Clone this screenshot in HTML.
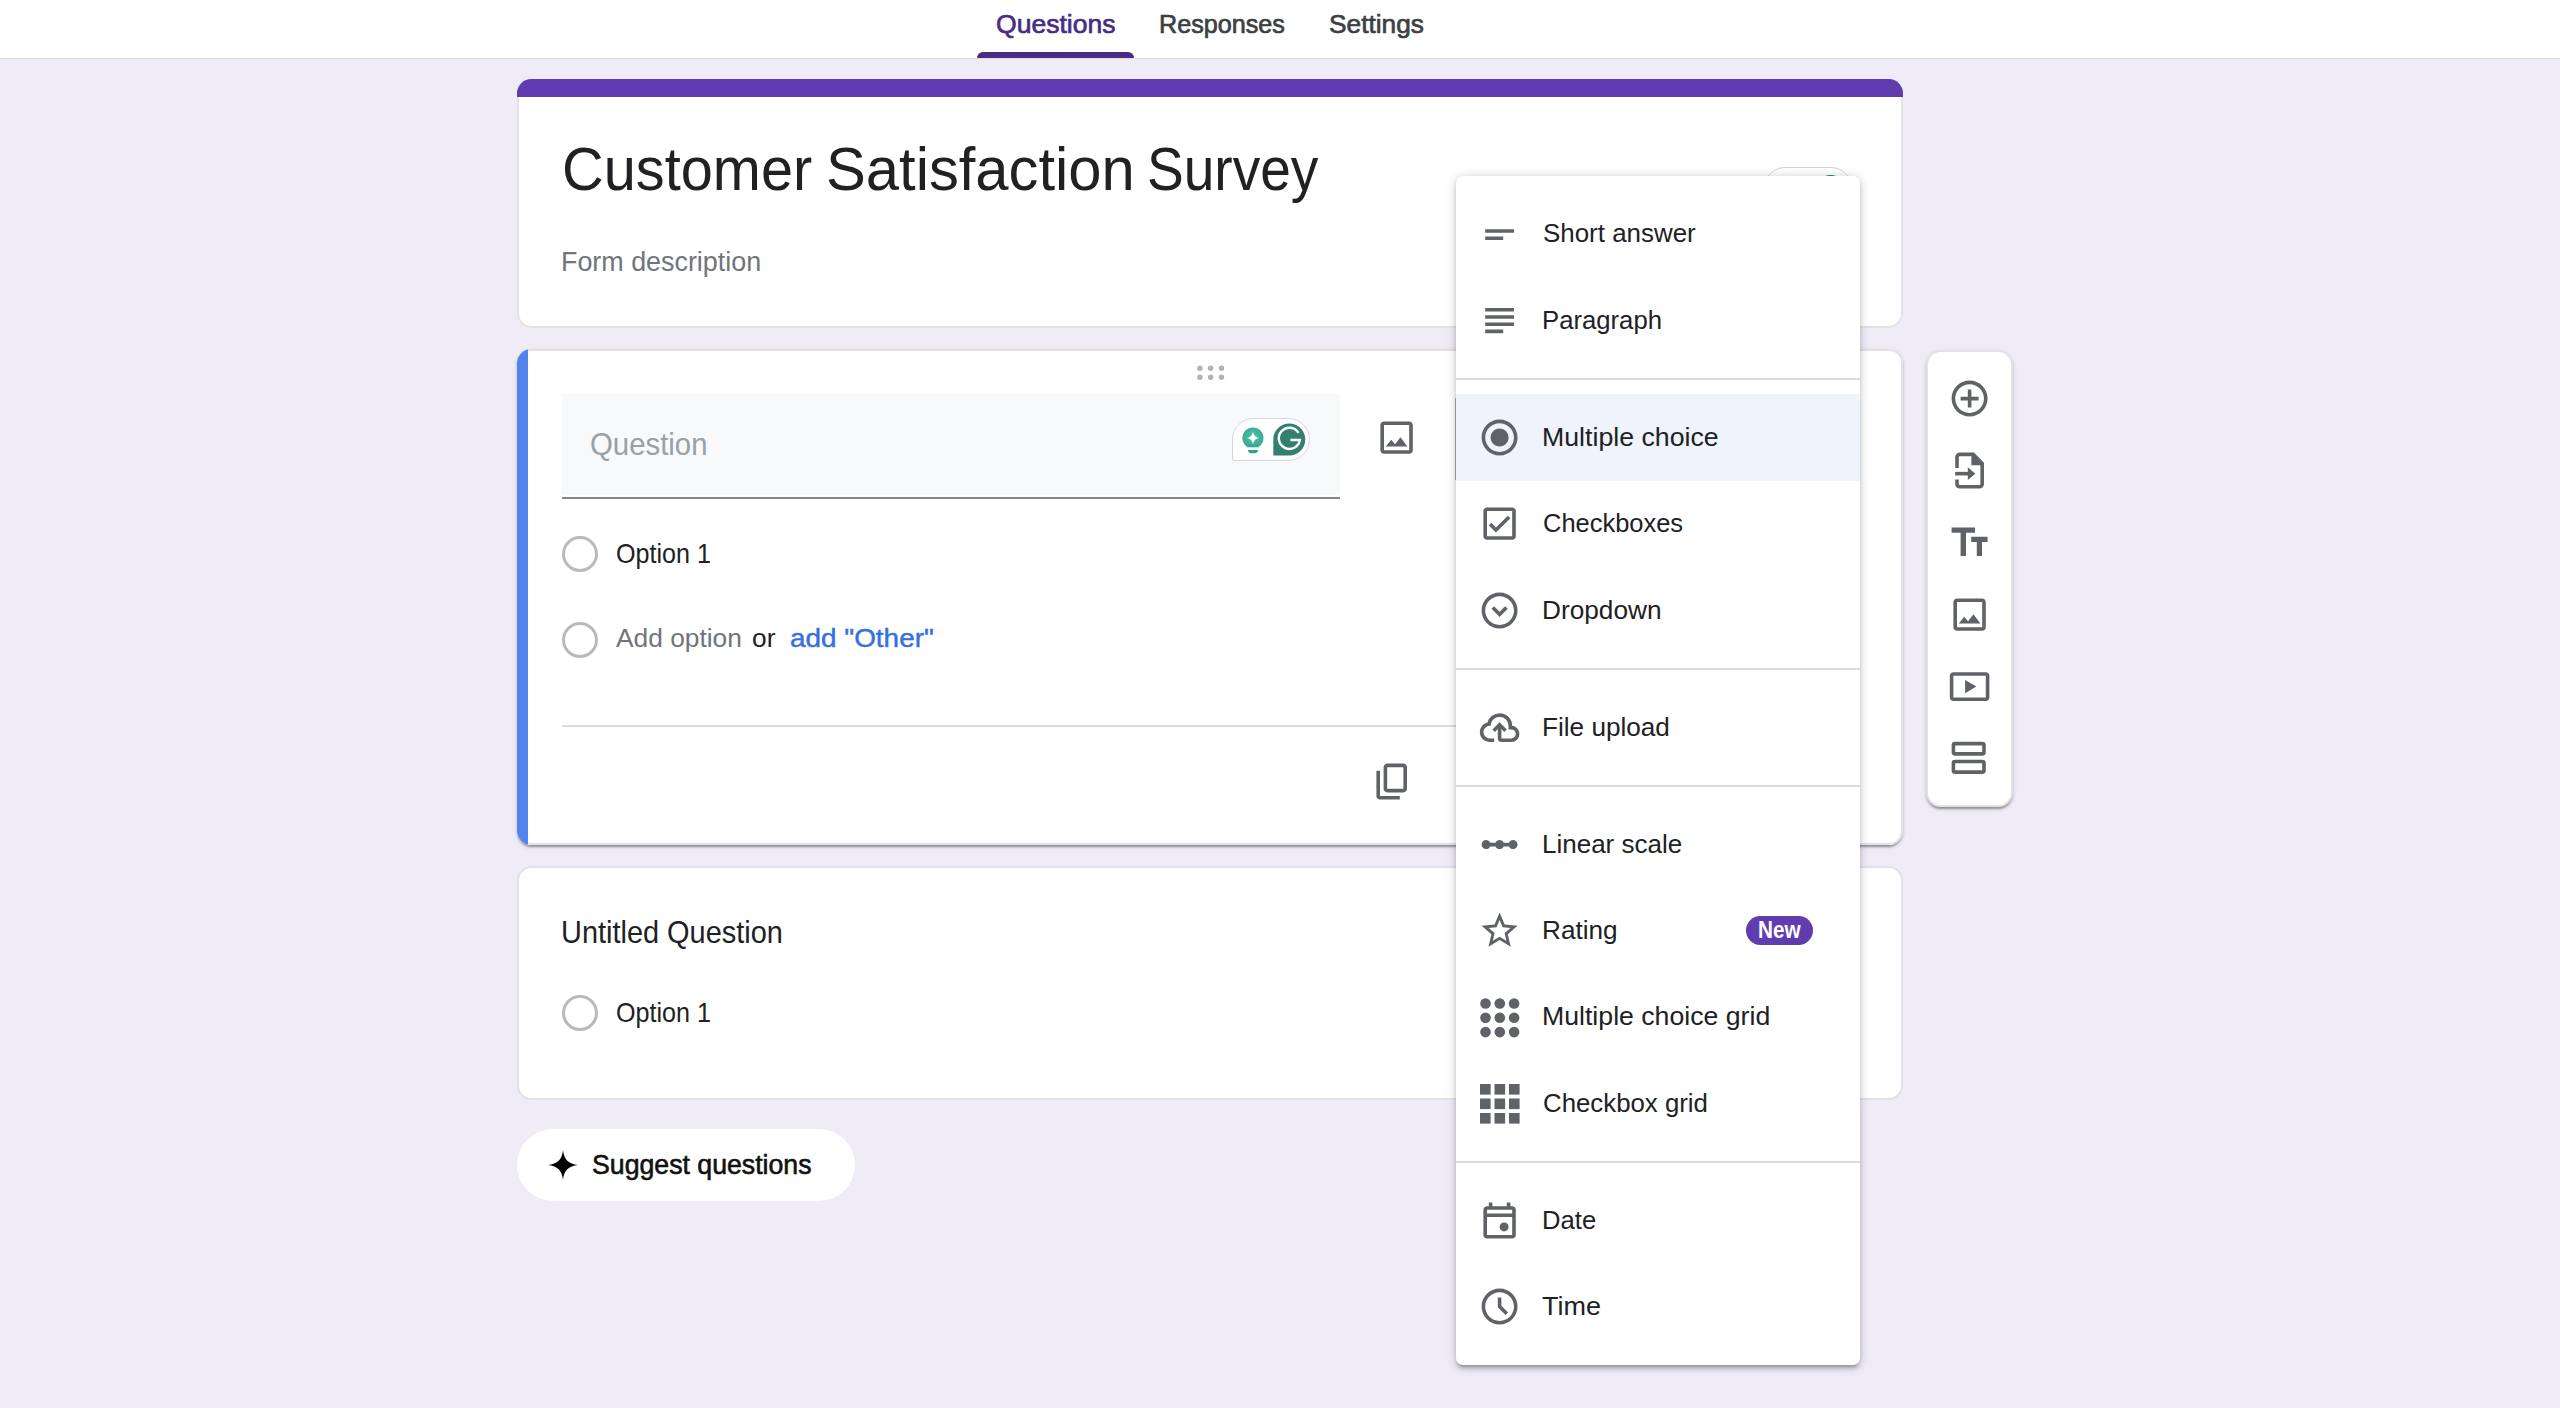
<!DOCTYPE html>
<html lang="en">
<head>
<meta charset="utf-8">
<title>Customer Satisfaction Survey - Google Forms</title>
<style>
*{box-sizing:border-box;margin:0;padding:0}
html,body{width:2560px;height:1408px;overflow:hidden}
body{background:#efebf7;font-family:"Liberation Sans",sans-serif;position:relative}
.abs{position:absolute}
.t{position:absolute;white-space:nowrap;transform-origin:0 0;display:block}
#topbar{left:0;top:0;width:2560px;height:59px;background:#fff;border-bottom:1px solid #dadce0}
#tabind{left:977px;top:52px;width:157px;height:6px;background:#482c83;border-radius:6px 6px 0 0}
.card{background:#fff;border:2px solid #e0e2e6;border-radius:14.4px}
#card1{left:517px;top:79px;width:1386px;height:249px;overflow:hidden;border:none;box-shadow:inset 0 0 0 2px #e0e2e6}
#card1bar{left:0;top:0;width:1386px;height:18px;background:#613cb0}
#card2{left:517px;top:349px;width:1386px;height:496px;border:none;overflow:hidden;box-shadow:inset 0 2px 0 #e0e2e6,inset -2px 0 0 #e0e2e6,inset 0 -2px 0 #e0e2e6,0 4px 2px -2px rgba(0,0,0,.2),0 2px 2px 0 rgba(0,0,0,.14),0 2px 5px 0 rgba(0,0,0,.12)}
#card2bar{left:0;top:0;width:11px;height:496px;background:#5383ec}
#card3{left:517px;top:866px;width:1386px;height:234px}
#qinput{left:561.5px;top:394px;width:778px;height:101px;background:#f8f9fa}
#qline{left:561.5px;top:497px;width:778px;height:2px;background:#80868b}
#divider{left:562px;top:725px;width:1298px;height:2px;background:#dadce0}
.radio{width:36px;height:36px;border-radius:50%;border:3.4px solid #bababa}
#suggest{left:517px;top:1129px;width:338px;height:72px;border-radius:36px;background:#fff}
#toolbar{left:1926px;top:350px;width:87px;height:457px;border-radius:14.4px;background:#fff;border:2px solid #e0e2e6;box-shadow:0 4px 2px -2px rgba(0,0,0,.2),0 2px 2px 0 rgba(0,0,0,.14),0 2px 5px 0 rgba(0,0,0,.12)}
#menu{left:1456px;top:176px;width:404px;height:1189px;border-radius:7px;background:#fff;box-shadow:0 3.6px 3.6px 0 rgba(0,0,0,.14),0 5.4px 1.8px -3.6px rgba(0,0,0,.12),0 1.8px 10.5px 0 rgba(0,0,0,.2)}
.sep{left:0;width:404px;height:2px;background:#dadce0}
#mhl{left:0;top:218px;width:404px;height:87px;background:#eff3fc}
svg.ic{position:absolute;width:43.2px;height:43.2px;fill:#5f6368;overflow:visible}
</style>
</head>
<body>
<div id="topbar" class="abs"></div>
<div id="tabind" class="abs"></div>

<div id="card1" class="abs card"><div id="card1bar" class="abs"></div></div>
<div id="card2" class="abs card"><div id="card2bar" class="abs"></div></div>
<div id="card3" class="abs card"></div>

<!-- hidden grammarly pill peeking behind menu -->
<div class="abs" style="left:1764px;top:167px;width:88px;height:43px;border:1px solid #d0d2e0;border-radius:21px 21px 21px 2px;background:#fff"></div>
<div class="abs" style="left:1815px;top:174.500px;width:31px;height:31px;border-radius:50%;background:#2f7f6f"></div>

<!-- drag handle -->
<svg class="abs" style="left:1194px;top:362px" width="34" height="22" viewBox="0 0 34 22"><g fill="#b2b2b2"><circle cx="5.900" cy="6.250" r="2.700"/><circle cx="16.600" cy="6.250" r="2.700"/><circle cx="27.500" cy="6.250" r="2.700"/><circle cx="5.900" cy="15.200" r="2.700"/><circle cx="16.600" cy="15.200" r="2.700"/><circle cx="27.500" cy="15.200" r="2.700"/></g></svg>

<div id="qinput" class="abs"></div><div id="qline" class="abs"></div>

<!-- grammarly pill -->
<div class="abs" style="left:1232px;top:418px;width:78px;height:43px;border:1px solid #d3d5e2;border-radius:21.5px 21.5px 21.5px 2px;background:#fff"></div>
<svg class="abs" style="left:1232px;top:418px" width="78" height="43" viewBox="0 0 78 43">
  <defs><radialGradient id="gb" cx="50%" cy="45%" r="60%"><stop offset="0" stop-color="#4cc3aa"/><stop offset="1" stop-color="#37a58f"/></radialGradient></defs>
  <circle cx="21" cy="20" r="10.6" fill="url(#gb)"/>
  <path d="M15.5 26h11v4.2h-11z" fill="#3aa991"/>
  <path d="M16 32h10c0 2-1.2 3.2-3 3.2h-4c-1.800 0-3-1.200-3-3.200z" fill="#35a08a"/>
  <path d="M15.200 29.300h11.600v2.100H15.200z" fill="#fff"/>
  <path d="M21 13.500c.7 3.800 2.200 5.600 6 6.500-3.800.900-5.300 2.700-6 6.500-.7-3.800-2.200-5.600-6-6.500 3.800-.900 5.300-2.700 6-6.500z" fill="#fff"/>
  <path d="M57.300 5.500c8.900 0 16 7.100 16 16s-7.100 16-16 16h-16v-16c0-8.900 7.100-16 16-16z" fill="#34806f"/>
  <path d="M66.500 14.800a10.600 10.600 0 1 0 1.400 7.200h-9.500" fill="none" stroke="#fff" stroke-width="2.400" stroke-linecap="butt"/>
</svg>

<!-- image icon in card2 -->
<svg class="ic" style="left:1375.4px;top:415.9px" viewBox="0 0 24 24"><path d="M19 5v14H5V5h14m0-2H5c-1.100 0-2 .9-2 2v14c0 1.100.9 2 2 2h14c1.100 0 2-.9 2-2V5c0-1.100-.9-2-2-2zm-4.860 8.860l-3 3.870L9 13.140 6 17h12l-3.860-5.140z"/></svg>

<!-- radios -->
<div class="abs radio" style="left:561.6px;top:535.700px"></div>
<div class="abs radio" style="left:561.6px;top:621.800px"></div>
<div class="abs radio" style="left:561.6px;top:994.500px"></div>

<div id="divider" class="abs"></div>

<!-- copy icon -->
<svg class="ic" style="left:1370.800px;top:759.600px" viewBox="0 0 24 24"><path d="M9 18q-.825 0-1.412-.587Q7 16.825 7 16V4q0-.825.588-1.413Q8.175 2 9 2h9q.825 0 1.413.587Q20 3.175 20 4v12q0 .825-.587 1.413Q18.825 18 18 18Zm0-2h9V4H9v12Zm-4 6q-.825 0-1.413-.587Q3 20.825 3 20V6h2v14h11v2Z"/></svg>

<!-- suggest button -->
<div id="suggest" class="abs"></div>
<svg class="abs" style="left:548px;top:1150px" width="30" height="30" viewBox="0 0 30 30"><path d="M15 0c.9 9.400 5.600 14.100 15 15-9.400.9-14.100 5.600-15 15-.9-9.400-5.600-14.100-15-15 9.400-.9 14.100-5.600 15-15z" fill="#000"/></svg>

<!-- side toolbar -->
<div id="toolbar" class="abs">
  <svg class="ic" style="left:19.900px;top:24.6px" viewBox="0 0 24 24"><path d="M13 7h-2v4H7v2h4v4h2v-4h4v-2h-4V7zm-1-5C6.480 2 2 6.480 2 12s4.480 10 10 10 10-4.480 10-10S17.520 2 12 2zm0 18c-4.410 0-8-3.590-8-8s3.590-8 8-8 8 3.590 8 8-3.590 8-8 8z"/></svg>
  <svg class="ic" style="left:19.900px;top:96.6px" viewBox="0 0 24 24"><g fill="none" stroke="#5f6368" stroke-width="2"><path d="M5 10.500V4.500c0-.8.7-1.500 1.500-1.500H14l5 5v11.500c0 .8-.7 1.500-1.500 1.500h-11c-.8 0-1.500-.7-1.500-1.500V17"/><path d="M4 13.700h9"/></g><path d="M13 3v6h6z"/><path d="M11 10.200l4.200 3.500-4.200 3.500z"/></svg>
  <svg class="ic" style="left:19.900px;top:168.6px" viewBox="0 0 24 24"><path d="M2 3.600v2.900h5v12.900h3V6.500h5V3.600H2zm20 5.200h-9.100v2.900h3.100v7.700h2.900v-7.700H22V8.800z"/></svg>
  <svg class="ic" style="left:19.900px;top:240.6px" viewBox="0 0 24 24"><path d="M19 5v14H5V5h14m0-2H5c-1.100 0-2 .9-2 2v14c0 1.100.9 2 2 2h14c1.100 0 2-.9 2-2V5c0-1.100-.9-2-2-2zm-4.860 8.860l-3 3.870L9 13.140 6 17h12l-3.860-5.140z"/></svg>
  <svg class="ic" style="left:19.900px;top:312.6px" viewBox="0 0 24 24"><path d="M21 4H3c-1.100 0-2 .9-2 2v12c0 1.100.9 2 2 2h18c1.100 0 2-.9 2-2V6c0-1.100-.9-2-2-2zm0 14H3V6h18v12zM9.500 8.300v7.400l6.300-3.700z"/></svg>
  <svg class="ic" style="left:19.900px;top:384.6px" viewBox="0 0 24 24"><g fill="none" stroke="#5f6368" stroke-width="2"><rect x="3" y="3.700" width="17" height="5.700" rx="0.900"/><rect x="3" y="13.600" width="17" height="5.900" rx="0.900"/></g></svg>
</div>

<div class="abs" style="left:1455px;top:398px;width:1px;height:82px;background:#a9abb8"></div>
<!-- dropdown menu -->
<div id="menu" class="abs">
  <div id="mhl" class="abs"></div>
  <div class="abs sep" style="top:202px"></div>
  <div class="abs sep" style="top:492px"></div>
  <div class="abs sep" style="top:609px"></div>
  <div class="abs sep" style="top:985px"></div>
  <!-- icons: left = 21.800 (center 43.4) ; top = centerY-176-21.600 -->
  <svg class="ic" style="left:21.800px;top:36.800px" viewBox="0 0 24 24"><path d="M4 9h16v2H4zm0 4h10v2H4z"/></svg>
  <svg class="ic" style="left:21.800px;top:122.800px" viewBox="0 0 24 24"><path d="M14 17H4v2h10v-2zm6-8H4v2h16V9zM4 15h16v-2H4v2zM4 5v2h16V5H4z"/></svg>
  <svg class="ic" style="left:21.800px;top:239.800px" viewBox="0 0 24 24"><path d="M12 7c-2.760 0-5 2.240-5 5s2.240 5 5 5 5-2.240 5-5-2.240-5-5-5zm0-5C6.480 2 2 6.480 2 12s4.480 10 10 10 10-4.480 10-10S17.520 2 12 2zm0 18c-4.420 0-8-3.580-8-8s3.580-8 8-8 8 3.580 8 8-3.580 8-8 8z"/></svg>
  <svg class="ic" style="left:21.800px;top:326.200px" viewBox="0 0 24 24"><path d="M19 3H5c-1.100 0-2 .9-2 2v14c0 1.100.9 2 2 2h14c1.100 0 2-.9 2-2V5c0-1.100-.9-2-2-2zm0 16H5V5h14v14zM17.990 9l-1.410-1.420-6.590 6.590-2.580-2.570-1.420 1.410 4 3.990z"/></svg>
  <svg class="ic" style="left:21.800px;top:412.600px" viewBox="0 0 24 24"><path d="M15.080 9.590L12 12.670 8.920 9.590 7.500 11l4.500 4.500 4.500-4.500-1.420-1.410zM12 2C6.480 2 2 6.480 2 12s4.480 10 10 10 10-4.480 10-10S17.520 2 12 2zm0 18c-4.410 0-8-3.590-8-8s3.590-8 8-8 8 3.590 8 8-3.590 8-8 8z"/></svg>
  <svg class="ic" style="left:21.800px;top:529.600px" viewBox="0 0 24 24"><path d="M6.500 20q-2.280 0-3.890-1.570Q1 16.850 1 14.580q0-1.950 1.170-3.480 1.180-1.530 3.080-1.950.63-2.300 2.500-3.720Q9.630 4 12 4q2.930 0 4.960 2.040Q19 8.070 19 11q1.730.2 2.860 1.490Q23 13.780 23 15.500q0 1.880-1.310 3.190T18.500 20H13q-.820 0-1.410-.59Q11 18.830 11 18v-5.150L9.400 14.400 8 13l4-4 4 4-1.400 1.400-1.600-1.550V18h5.500q1.050 0 1.770-.73.73-.72.73-1.770t-.73-1.770Q19.550 13 18.500 13H17v-2q0-2.070-1.460-3.540Q14.070 6 12 6T8.460 7.460Q7 8.930 7 11h-.5q-1.450 0-2.480 1.030Q3 13.050 3 14.500t1.020 2.480Q5.050 18 6.500 18H9v2Z"/></svg>
  <svg class="ic" style="left:21.800px;top:646.600px" viewBox="0 0 24 24"><path d="M19.500 9.500c-1.030 0-1.900.62-2.290 1.500h-2.920c-.39-.88-1.260-1.500-2.290-1.500s-1.900.62-2.290 1.500H6.790c-.39-.88-1.260-1.500-2.290-1.500C3.120 9.500 2 10.620 2 12s1.120 2.500 2.500 2.500c1.030 0 1.900-.62 2.290-1.500h2.920c.39.880 1.260 1.500 2.290 1.500s1.900-.62 2.290-1.500h2.920c.39.880 1.260 1.500 2.290 1.500 1.380 0 2.500-1.120 2.500-2.500s-1.120-2.500-2.500-2.500z"/></svg>
  <svg class="ic" style="left:21.800px;top:733px" viewBox="0 0 24 24"><path d="M22 9.240l-7.190-.62L12 2 9.190 8.630 2 9.240l5.460 4.730L5.820 21 12 17.270 18.180 21l-1.630-7.030L22 9.240zM12 15.400l-3.760 2.270 1-4.280-3.320-2.880 4.380-.38L12 6.100l1.710 4.040 4.380.38-3.320 2.880 1 4.280L12 15.400z"/></svg>
  <!-- MC grid: 9 dots -->
  <svg class="abs" style="left:24px;top:821.500px" width="40" height="40" viewBox="0 0 40 40"><g fill="#5f6368"><circle cx="5.500" cy="5.500" r="5.300"/><circle cx="19.800" cy="5.500" r="5.300"/><circle cx="34.100" cy="5.500" r="5.300"/><circle cx="5.500" cy="19.800" r="5.300"/><circle cx="19.800" cy="19.800" r="5.300"/><circle cx="34.100" cy="19.800" r="5.300"/><circle cx="5.500" cy="34.100" r="5.300"/><circle cx="19.800" cy="34.100" r="5.300"/><circle cx="34.100" cy="34.100" r="5.300"/></g></svg>
  <!-- Checkbox grid: 9 squares -->
  <svg class="abs" style="left:24px;top:908px" width="40" height="40" viewBox="0 0 40 40"><g fill="#5f6368"><rect x="0" y="0" width="10.600" height="10.600"/><rect x="14.500" y="0" width="10.600" height="10.600"/><rect x="29" y="0" width="10.600" height="10.600"/><rect x="0" y="14.500" width="10.600" height="10.600"/><rect x="14.500" y="14.500" width="10.600" height="10.600"/><rect x="29" y="14.500" width="10.600" height="10.600"/><rect x="0" y="29" width="10.600" height="10.600"/><rect x="14.500" y="29" width="10.600" height="10.600"/><rect x="29" y="29" width="10.600" height="10.600"/></g></svg>
  <svg class="ic" style="left:21.800px;top:1022.800px" viewBox="0 0 24 24"><path d="M14.500 18q-1.050 0-1.770-.73Q12 16.550 12 15.500t.73-1.770Q13.450 13 14.500 13t1.780.73q.72.72.72 1.770t-.72 1.770q-.73.73-1.780.73ZM5 22q-.82 0-1.410-.59Q3 20.830 3 20V6q0-.82.59-1.410Q4.180 4 5 4h1V2h2v2h8V2h2v2h1q.83 0 1.410.59Q21 5.180 21 6v14q0 .83-.59 1.410Q19.830 22 19 22Zm0-2h14V10H5v10ZM5 8h14V6H5Zm0 0V6v2Z"/></svg>
  <svg class="ic" style="left:21.800px;top:1109.200px" viewBox="0 0 24 24"><path d="M12 2C6.480 2 2 6.480 2 12s4.480 10 10 10 10-4.480 10-10S17.520 2 12 2zm0 18c-4.420 0-8-3.580-8-8s3.580-8 8-8 8 3.580 8 8-3.580 8-8 8zm3.300-3.300l1.400-1.400-3.700-3.700V7h-2v5.400l4.300 4.300z"/></svg>
  <!-- New badge -->
  <div class="abs" style="left:290.300px;top:740.300px;width:66.400px;height:28.800px;border-radius:14.400px;background:#613cb0"></div>
</div>

<span class="t" id="t_q" style="left:995.90px;top:10.91px;font-size:26.45px;line-height:26.45px;color:#482c83;-webkit-text-stroke:0.7px #482c83;transform:scaleX(1.0042)">Questions</span>
<span class="t" id="t_r" style="left:1158.90px;top:10.91px;font-size:26.45px;line-height:26.45px;color:#3c4043;-webkit-text-stroke:0.7px #3c4043;transform:scaleX(0.9523)">Responses</span>
<span class="t" id="t_s" style="left:1328.61px;top:10.91px;font-size:26.45px;line-height:26.45px;color:#3c4043;-webkit-text-stroke:0.7px #3c4043;transform:scaleX(0.9936)">Settings</span>
<span class="t" id="t_title1" style="left:561.56px;top:139.32px;font-size:61.05px;line-height:61.05px;color:#202124;transform:scaleX(0.9458)">Customer</span>
<span class="t" id="t_title2" style="left:826.07px;top:139.32px;font-size:61.05px;line-height:61.05px;color:#202124;transform:scaleX(0.9782)">Satisfaction</span>
<span class="t" id="t_title3" style="left:1146.69px;top:139.32px;font-size:61.05px;line-height:61.05px;color:#202124;transform:scaleX(0.9021)">Survey</span>
<span class="t" id="t_desc" style="left:561.45px;top:247.62px;font-size:27.62px;line-height:27.62px;color:#70757a;transform:scaleX(0.9733)">Form description</span>
<span class="t" id="t_ques" style="left:590.40px;top:429.79px;font-size:30.96px;line-height:30.96px;color:#9aa0a6;transform:scaleX(0.9483)">Question</span>
<span class="t" id="t_o1" style="left:615.84px;top:539.50px;font-size:27.76px;line-height:27.76px;color:#202124;transform:scaleX(0.9053)">Option 1</span>
<span class="t" id="t_add" style="left:615.90px;top:624.73px;font-size:26.31px;line-height:26.31px;color:#70757a;transform:scaleX(1.0008)">Add option</span>
<span class="t" id="t_or" style="left:752.00px;top:624.73px;font-size:26.31px;line-height:26.31px;color:#202124;transform:scaleX(1.0000)">or</span>
<span class="t" id="t_other" style="left:789.93px;top:624.85px;font-size:26.16px;line-height:26.16px;color:#3470e0;-webkit-text-stroke:0.45px #3470e0;transform:scaleX(1.0662)">add &quot;Other&quot;</span>
<span class="t" id="t_unt" style="left:561.13px;top:917.79px;font-size:30.96px;line-height:30.96px;color:#202124;transform:scaleX(0.9343)">Untitled Question</span>
<span class="t" id="t_o2" style="left:615.84px;top:998.50px;font-size:27.76px;line-height:27.76px;color:#202124;transform:scaleX(0.9053)">Option 1</span>
<span class="t" id="t_sug" style="left:592.02px;top:1150.99px;font-size:27.18px;line-height:27.18px;color:#111111;-webkit-text-stroke:0.6px #111111;transform:scaleX(0.9820)">Suggest questions</span>
<span class="t" id="m_short" style="left:1542.52px;top:219.95px;font-size:26.53px;line-height:26.53px;color:#202124;transform:scaleX(0.9774)">Short answer</span>
<span class="t" id="m_para" style="left:1541.81px;top:307.35px;font-size:26.53px;line-height:26.53px;color:#202124;transform:scaleX(0.9688)">Paragraph</span>
<span class="t" id="m_mc" style="left:1541.74px;top:424.35px;font-size:26.53px;line-height:26.53px;color:#202124;transform:scaleX(1.0072)">Multiple choice</span>
<span class="t" id="m_cb" style="left:1542.79px;top:509.75px;font-size:26.53px;line-height:26.53px;color:#202124;transform:scaleX(0.9601)">Checkboxes</span>
<span class="t" id="m_dd" style="left:1541.77px;top:597.15px;font-size:26.53px;line-height:26.53px;color:#202124;transform:scaleX(0.9893)">Dropdown</span>
<span class="t" id="m_fu" style="left:1541.78px;top:714.15px;font-size:26.53px;line-height:26.53px;color:#202124;transform:scaleX(0.9861)">File upload</span>
<span class="t" id="m_ls" style="left:1541.79px;top:831.15px;font-size:26.53px;line-height:26.53px;color:#202124;transform:scaleX(0.9804)">Linear scale</span>
<span class="t" id="m_ra" style="left:1541.78px;top:916.55px;font-size:26.53px;line-height:26.53px;color:#202124;transform:scaleX(0.9863)">Rating</span>
<span class="t" id="m_mcg" style="left:1541.74px;top:1002.95px;font-size:26.53px;line-height:26.53px;color:#202124;transform:scaleX(1.0056)">Multiple choice grid</span>
<span class="t" id="m_cbg" style="left:1542.78px;top:1090.35px;font-size:26.53px;line-height:26.53px;color:#202124;transform:scaleX(0.9731)">Checkbox grid</span>
<span class="t" id="m_date" style="left:1541.82px;top:1207.35px;font-size:26.53px;line-height:26.53px;color:#202124;transform:scaleX(0.9670)">Date</span>
<span class="t" id="m_time" style="left:1541.98px;top:1292.75px;font-size:26.53px;line-height:26.53px;color:#202124;transform:scaleX(1.0179)">Time</span>
<span class="t" id="t_new" style="left:1758.12px;top:919.14px;font-size:23.69px;line-height:23.69px;color:#ffffff;font-weight:700;transform:scaleX(0.8750)">New</span>
</body>
</html>
